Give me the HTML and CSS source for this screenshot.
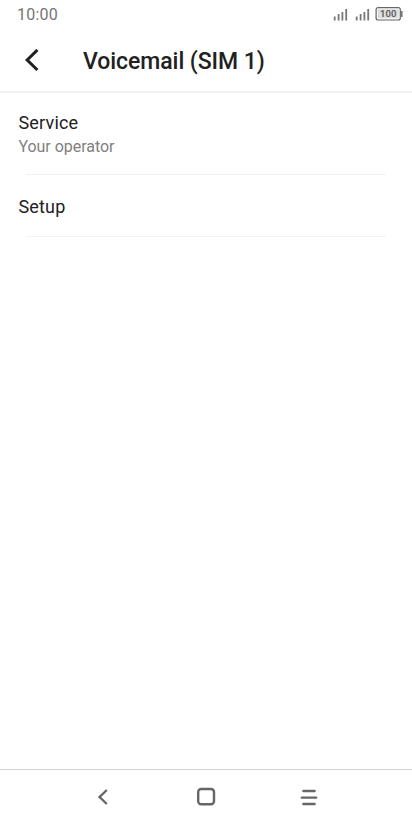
FILE: index.html
```html
<!DOCTYPE html>
<html lang="en">
<head>
<meta charset="utf-8">
<title>Voicemail (SIM 1)</title>
<link rel="stylesheet" href="styles.css">
</head>
<body>
<div class="status">
  <span class="time">10:00</span>
  <svg class="indicators" width="72" height="18" viewBox="0 0 72 18">
    <path d="M2.7 15.5v-4M6.6 15.5V9M10.4 15.5V7M14.2 15.5V4M24.7 15.5v-4M28.6 15.5V9M32.4 15.5V7M36.2 15.5V4" stroke="#777" stroke-width="1.8"/>
    <rect x="44.1" y="2.6" width="24.2" height="12.4" rx="2" fill="#fff" stroke="#666" stroke-width="1.2"/>
    <rect x="45.7" y="4.2" width="21" height="9.2" fill="#ddd"/>
    <path d="M69 6h1.6v6H69z" fill="#777"/>
    <text class="charge" x="56.2" y="12.2" text-anchor="middle">100</text>
  </svg>
</div>
<header class="header">
  <svg class="back" width="16" height="24" viewBox="0 0 16 24"><path d="M13.4 1L3.2 11l10.2 10" fill="none" stroke="#212121" stroke-width="3.1"/></svg>
  <h1 class="title">Voicemail (SIM 1)</h1>
</header>
<main class="list">
  <section class="item service"><div class="name">Service</div><div class="detail">Your operator</div></section>
  <section class="item setup"><div class="name">Setup</div></section>
</main>
<nav class="nav">
  <svg width="20" height="20" viewBox="0 0 20 20"><path d="M13.8 3L6.6 10l7.2 7"/></svg>
  <svg width="20" height="20" viewBox="0 0 20 20"><rect x="2.2" y="2" width="15.8" height="15.2" rx="3"/></svg>
  <svg width="20" height="20" viewBox="0 0 20 20"><path d="M4.4 4h11.2M2.8 10.6h14.4M4.4 17h11.2" stroke-linecap="round"/></svg>
</nav>
</body>
</html>
```
FILE: styles.css
```css
* { box-sizing: border-box; }
body { margin: 0; height: 824px; display: flex; flex-direction: column; background: #fff; font-family: Roboto, sans-serif; color: #212121; overflow: hidden; }
.status { height: 30px; display: flex; justify-content: space-between; padding: 5px 8px 0 17px; }
.time { font-size: 16px; line-height: 20px; color: #757575; letter-spacing: .2px; }
.charge { font-size: 9.5px; fill: #555; font-weight: 500; }
.header { height: 63px; display: flex; align-items: center; padding: 0 24px; border-bottom: 2px solid #f1f1f1; }
.title { margin: 2px 0 0 43px; font-size: 23px; line-height: 30px; font-weight: 500; letter-spacing: -.06px; white-space: nowrap; }
.list { flex: 1; }
.item { padding: 0 18.4px; border-bottom: 1px solid; border-image: linear-gradient(90deg, transparent 27px, #f2f2f2 27px, #f2f2f2 385px, transparent 385px) 1; }
.service { height: 82px; padding-top: 18px; }
.setup { height: 62px; padding-top: 20px; }
.name { font-size: 18px; line-height: 24px; letter-spacing: .2px; }
.detail { margin-top: 1px; font-size: 16px; line-height: 22px; color: #808080; letter-spacing: -.03px; }
.nav { height: 55px; border-top: 1px solid #d2d2d2; display: flex; align-items: center; justify-content: center; gap: 83px; }
.nav svg { fill: none; stroke: #666; stroke-width: 2.4; }
```
